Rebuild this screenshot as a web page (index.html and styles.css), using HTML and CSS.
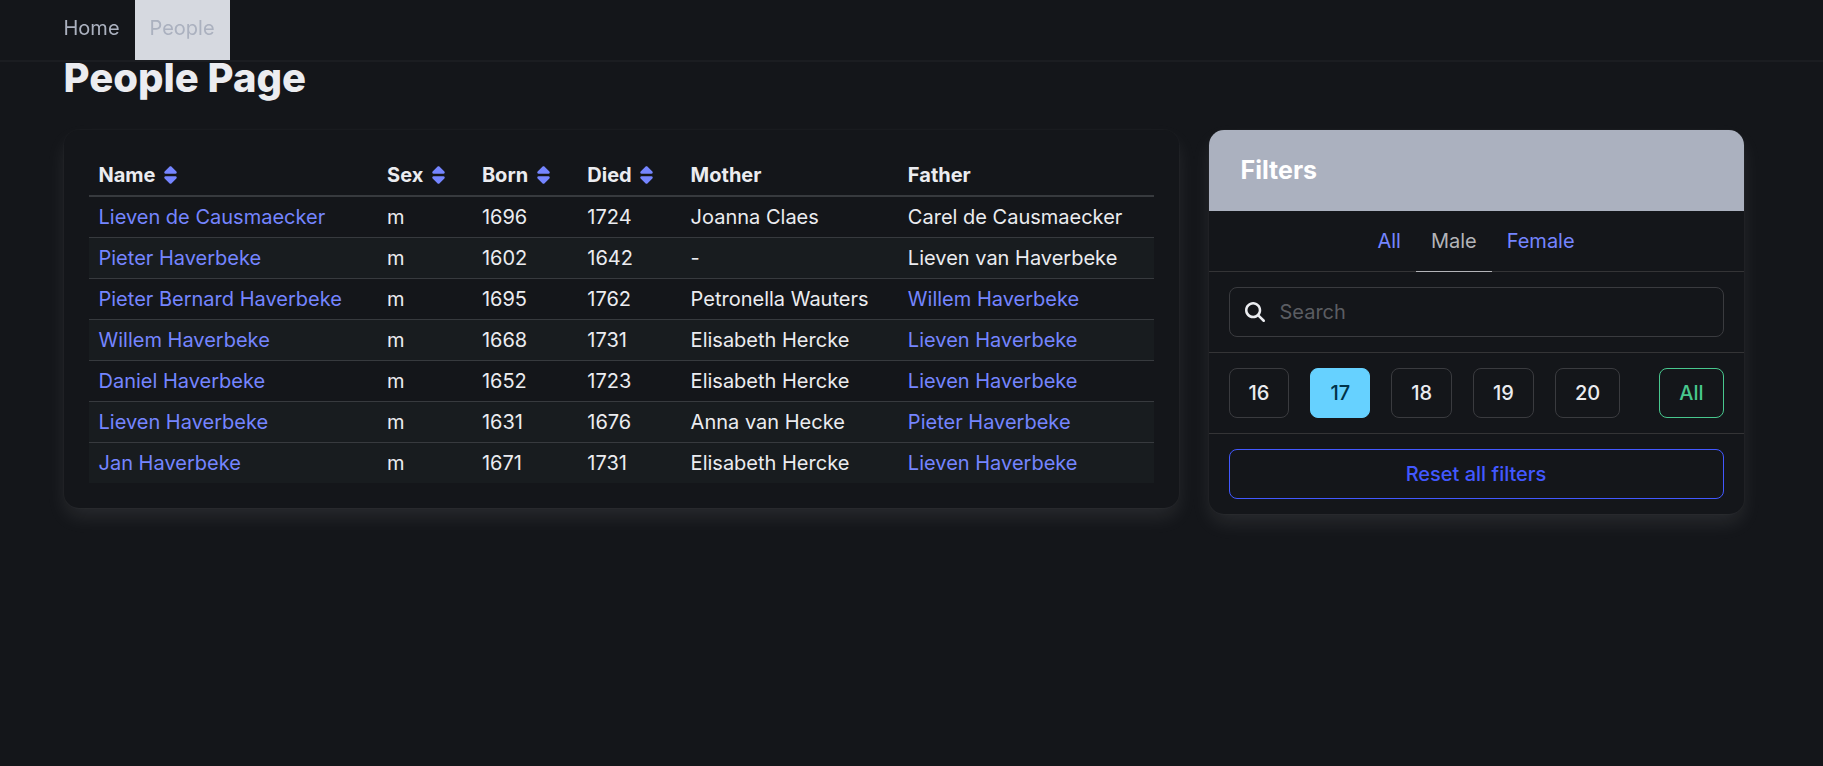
FILE: index.html
```html
<!DOCTYPE html>
<html lang="en">
<head>
<meta charset="utf-8">
<title>People Page</title>
<link rel="stylesheet" href="styles.css">
</head>
<body>
<svg class="sprite" aria-hidden="true">
  <symbol id="sort" viewBox="0 0 320 512"><path d="M137.400 41.400c12.500-12.500 32.800-12.500 45.300 0l128 128c9.200 9.200 11.900 22.900 6.900 34.900s-16.600 19.800-29.600 19.800H32c-12.900 0-24.600-7.800-29.600-19.800s-2.200-25.700 6.900-34.900l128-128zm0 429.300l-128-128c-9.200-9.200-11.900-22.900-6.900-34.900s16.600-19.800 29.600-19.800H288c12.900 0 24.600 7.800 29.600 19.800s2.200 25.700-6.900 34.900l-128 128c-12.500 12.500-32.800 12.500-45.300 0z"/></symbol>
</svg>
<nav class="navbar" aria-label="Main">
  <div class="container navbar-menu">
    <a class="navbar-item" href="#home">Home</a>
    <a class="navbar-item is-active" href="#people" aria-current="page">People</a>
  </div>
</nav>
<main class="container">
  <h1 class="title">People Page</h1>
  <div class="columns">
    <div class="box table-box">
      <table class="table">
        <colgroup>
          <col class="col-name"><col class="col-sex"><col class="col-born"><col class="col-died"><col class="col-mother"><col class="col-father">
        </colgroup>
        <thead>
          <tr>
            <th scope="col"><span class="head">Name<a class="sort" href="#name" aria-label="Sort by name"><svg><use href="#sort"/></svg></a></span></th>
            <th scope="col"><span class="head">Sex<a class="sort" href="#sex" aria-label="Sort by sex"><svg><use href="#sort"/></svg></a></span></th>
            <th scope="col"><span class="head">Born<a class="sort" href="#born" aria-label="Sort by born"><svg><use href="#sort"/></svg></a></span></th>
            <th scope="col"><span class="head">Died<a class="sort" href="#died" aria-label="Sort by died"><svg><use href="#sort"/></svg></a></span></th>
            <th scope="col">Mother</th>
            <th scope="col">Father</th>
          </tr>
        </thead>
        <tbody>
          <tr><td><a href="#p1">Lieven de Causmaecker</a></td><td>m</td><td>1696</td><td>1724</td><td>Joanna Claes</td><td>Carel de Causmaecker</td></tr>
          <tr><td><a href="#p2">Pieter Haverbeke</a></td><td>m</td><td>1602</td><td>1642</td><td>-</td><td>Lieven van Haverbeke</td></tr>
          <tr><td><a href="#p3">Pieter Bernard Haverbeke</a></td><td>m</td><td>1695</td><td>1762</td><td>Petronella Wauters</td><td><a href="#p4">Willem Haverbeke</a></td></tr>
          <tr><td><a href="#p4">Willem Haverbeke</a></td><td>m</td><td>1668</td><td>1731</td><td>Elisabeth Hercke</td><td><a href="#p6">Lieven Haverbeke</a></td></tr>
          <tr><td><a href="#p5">Daniel Haverbeke</a></td><td>m</td><td>1652</td><td>1723</td><td>Elisabeth Hercke</td><td><a href="#p6">Lieven Haverbeke</a></td></tr>
          <tr><td><a href="#p6">Lieven Haverbeke</a></td><td>m</td><td>1631</td><td>1676</td><td>Anna van Hecke</td><td><a href="#p2">Pieter Haverbeke</a></td></tr>
          <tr><td><a href="#p7">Jan Haverbeke</a></td><td>m</td><td>1671</td><td>1731</td><td>Elisabeth Hercke</td><td><a href="#p6">Lieven Haverbeke</a></td></tr>
        </tbody>
      </table>
    </div>
    <aside class="panel">
      <h2 class="panel-heading">Filters</h2>
      <div class="panel-tabs">
        <a href="#all">All</a>
        <a class="is-active" href="#male">Male</a>
        <a href="#female">Female</a>
      </div>
      <div class="panel-block">
        <label class="search">
          <svg class="search-icon" viewBox="0 0 512 512" aria-hidden="true"><path d="M416 208c0 45.900-14.900 88.300-40 122.700L502.600 457.400c12.500 12.500 12.500 32.800 0 45.300s-32.800 12.500-45.300 0L330.700 376c-34.400 25.200-76.800 40-122.700 40C93.100 416 0 322.900 0 208S93.100 0 208 0S416 93.100 416 208zM208 352a144 144 0 1 0 0-288 144 144 0 1 0 0 288z"/></svg>
          <input class="search-input" type="search" placeholder="Search" aria-label="Search">
        </label>
      </div>
      <div class="panel-block centuries">
        <button class="button" type="button">16</button>
        <button class="button is-info" type="button" aria-pressed="true">17</button>
        <button class="button" type="button">18</button>
        <button class="button" type="button">19</button>
        <button class="button" type="button">20</button>
        <button class="button is-success" type="button">All</button>
      </div>
      <div class="panel-block">
        <button class="button is-link" type="button">Reset all filters</button>
      </div>
    </aside>
  </div>
</main>
</body>
</html>
```
FILE: styles.css
```css
:root {
  --bg: #14161a;
  --text: #abb1bf;
  --strong: #ebecf0;
  --link: #7585ff;
  --line: #343436;
  --gutter: 16px;
  --shadow: 0 10px 20px -2px rgba(235, 236, 240, 0.1), 0 0 0 1px rgba(235, 236, 240, 0.02);
}

*, *::before, *::after { box-sizing: border-box; }

body {
  min-height: 100vh;
  margin: 0;
  padding-right: var(--gutter);
  background: var(--bg);
  color: var(--text);
  font: 400 20px/30px Inter, "Liberation Sans", sans-serif;
}

a { color: var(--link); text-decoration: none; }

.sprite { display: none; }

.container { max-width: 1680px; margin: 0 auto; }

.navbar {
  position: fixed;
  inset: 0 0 auto;
  z-index: 1;
  padding-right: var(--gutter);
  background: var(--bg);
  box-shadow: 0 2px 0 #1b1d21;
}

.navbar-menu { display: flex; }

.navbar-item { padding: 13px 15px 17px; color: var(--text); }
.navbar-item:first-child { margin-left: -15px; }
.navbar-item.is-active { background: #d6d9e0; }

main.container { padding-top: 55px; }

.title {
  margin: 0 0 30px;
  color: var(--strong);
  font-size: 40px;
  font-weight: 800;
  line-height: 45px;
}

.columns {
  display: grid;
  grid-template-columns: minmax(0, 1115fr) minmax(0, 535fr);
  align-items: start;
  gap: 30px;
}

.box, .panel {
  border-radius: 15px;
  background: var(--bg);
  box-shadow: var(--shadow);
}

.table-box { padding: 25px; }

.table {
  width: 100%;
  border-collapse: collapse;
  table-layout: fixed;
  color: var(--strong);
}
.col-name { width: 27.1%; }
.col-sex { width: 8.9%; }
.col-born { width: 9.9%; }
.col-died { width: 9.7%; }
.col-mother { width: 20.4%; }
.col-father { width: 24%; }

.table th, .table td {
  padding: 5px 10px;
  border-bottom: 1px solid #373a3e;
  text-align: left;
  white-space: nowrap;
}
.table th { border-bottom-width: 2px; font-weight: 700; }
.table tbody tr:last-child td { border-bottom: 0; }
.table tbody tr:nth-child(even), .table tbody tr:last-child { background: #181c1f; }

.head { display: flex; }
.sort {
  display: flex;
  align-items: center;
  justify-content: center;
  width: 30px;
  height: 30px;
}
.sort svg { width: 13px; height: 20px; fill: currentColor; }

.panel-heading {
  margin: 0;
  padding: 25px 32px;
  border-radius: 15px 15px 0 0;
  background: #abb1bf;
  color: #fff;
  font-size: 25px;
  font-weight: 700;
  line-height: 31px;
}

.panel-tabs {
  display: flex;
  justify-content: center;
  border-bottom: 1px solid var(--line);
}
.panel-tabs a { margin-bottom: -1px; padding: 15px; border-bottom: 1px solid transparent; }
.panel-tabs .is-active { border-color: currentColor; color: #b3b4b8; }

.panel-block { display: flex; padding: 15px 20px; }
.panel-block:not(:last-child) { border-bottom: 1px solid var(--line); }
.centuries { gap: 21px; }

.search {
  display: flex;
  flex: 1;
  align-items: center;
  height: 50px;
  border: 1px solid #3a3b3f;
  border-radius: 8px;
}
.search-icon { width: 20px; height: 20px; margin: 0 15px; fill: var(--strong); }
.search-input {
  flex: 1;
  min-width: 0;
  padding: 0;
  border: 0;
  outline: 0;
  background: none;
  color: var(--strong);
  font: inherit;
}
.search-input::placeholder { color: #5b5d62; opacity: 1; }

.button {
  height: 50px;
  padding: 0 19px;
  border: 1px solid #3a3b3f;
  border-radius: 8px;
  background: transparent;
  color: var(--strong);
  font: 500 20px/30px Inter, "Liberation Sans", sans-serif;
  cursor: pointer;
}
.button.is-info { border-color: #66d1ff; background: #66d1ff; color: #003349; }
.button.is-success { margin-left: auto; border-color: #48c78e; color: #48c78e; }
.button.is-link { flex: 1; border-color: #4258ff; color: #4258ff; }
```
